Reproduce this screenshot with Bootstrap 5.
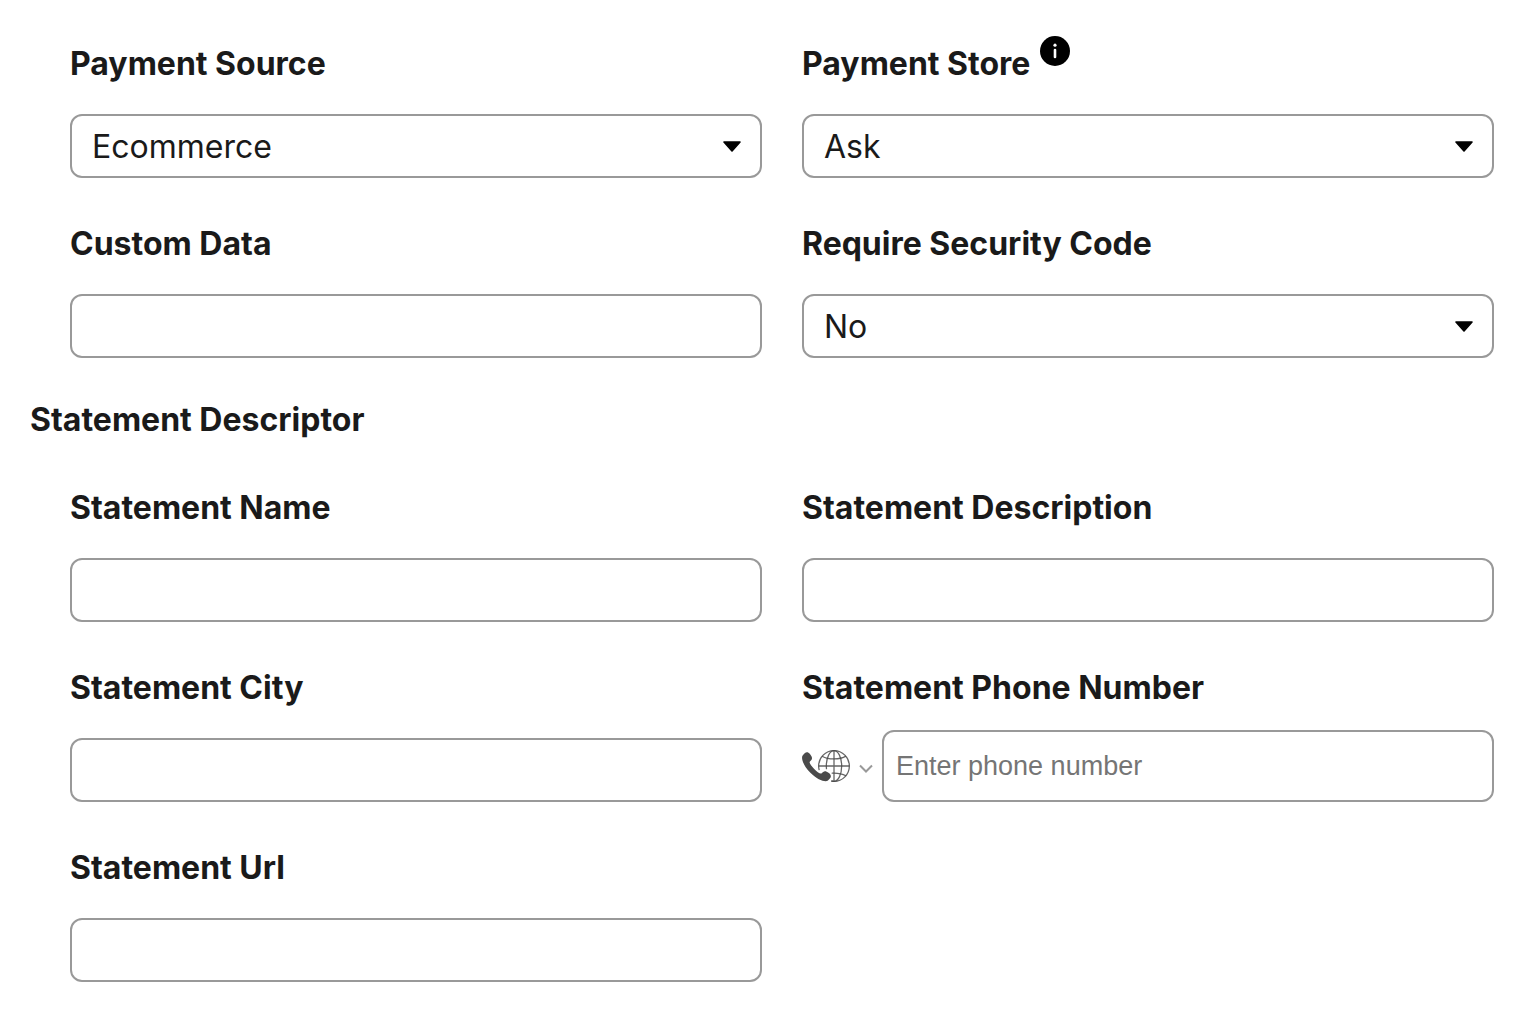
<!DOCTYPE html>
<html lang="en">
<head>
<meta charset="utf-8">
<meta name="viewport" content="width=device-width, initial-scale=1">
<title>Payment settings</title>
<link href="https://cdn.jsdelivr.net/npm/bootstrap@5.3.0/dist/css/bootstrap.min.css" rel="stylesheet">
<style>
  body { font-family: Inter, "Liberation Sans", sans-serif; font-size: 32px; line-height: 40px; color: #1a1a1a; background: #fff; }
  .settings { padding: 44px 38px 36px 30px; }
  .field-group { padding-left: 40px; }
  .field-grid { --bs-gutter-x: 40px; --bs-gutter-y: 46px; }
  .form-label, .section-title { font-size: 32px; line-height: 40px; font-weight: 700; }
  .form-label { margin-bottom: 30px; }
  .section-title { margin: 42px 0 48px; }
  .form-control, .form-select {
    height: 64px; padding: 0 20px; border: 2px solid #999; border-radius: 12px;
    font-size: 32px; line-height: 40px; color: #1a1a1a;
  }
  .form-select {
    padding: 2px 56px 0 20px;
    background-image: url("data:image/svg+xml,%3Csvg xmlns='http://www.w3.org/2000/svg' viewBox='0 0 18 12'%3E%3Cpath d='M1 1H17L9 10Z' stroke='%23000' stroke-width='1.6' stroke-linejoin='round'/%3E%3C/svg%3E");
    background-position: right 19px top 25px; background-size: 18px 12px;
  }
  .info-btn { top: -8px; margin-left: 10px; width: 30px; height: 30px; line-height: 0; }
  .form-label.phone-label { margin-bottom: 22px; }
  .form-control.phone-input { height: 72px; padding: 0 12px; font-family: "Liberation Sans", sans-serif; font-size: 27px; }
  .phone-input::placeholder { color: #757575; opacity: 1; }
  .country { gap: 9px; margin-right: 9px; color: #4a4a4a; }
  .country-arrow { margin-top: 6px; color: #999; }
</style>
</head>
<body>
<form class="settings">
  <div class="field-group">
    <div class="row field-grid">
      <div class="col-md-6">
        <label class="form-label d-block" for="source">Payment Source</label>
        <select class="form-select" id="source"><option>Ecommerce</option></select>
      </div>
      <div class="col-md-6">
        <div class="d-flex">
          <label class="form-label" for="store">Payment Store</label>
          <div class="position-relative">
            <button type="button" class="info-btn btn p-0 border-0 rounded-circle position-absolute" aria-label="About payment store">
              <svg width="30" height="30" viewBox="0 0 30 30" aria-hidden="true">
                <circle cx="15" cy="15" r="15" fill="#000"/>
                <circle cx="15" cy="9.2" r="1.6" fill="#fff"/>
                <path d="M15 14v7" stroke="#fff" stroke-width="2.6" stroke-linecap="round"/>
              </svg>
            </button>
          </div>
        </div>
        <select class="form-select" id="store"><option>Ask</option></select>
      </div>
      <div class="col-md-6">
        <label class="form-label d-block" for="custom">Custom Data</label>
        <input type="text" class="form-control" id="custom">
      </div>
      <div class="col-md-6">
        <label class="form-label d-block" for="security">Require Security Code</label>
        <select class="form-select" id="security"><option>No</option><option>Yes</option></select>
      </div>
    </div>
  </div>

  <h2 class="section-title">Statement Descriptor</h2>

  <div class="field-group">
    <div class="row field-grid">
      <div class="col-md-6">
        <label class="form-label d-block" for="st-name">Statement Name</label>
        <input type="text" class="form-control" id="st-name">
      </div>
      <div class="col-md-6">
        <label class="form-label d-block" for="st-desc">Statement Description</label>
        <input type="text" class="form-control" id="st-desc">
      </div>
      <div class="col-md-6">
        <label class="form-label d-block" for="st-city">Statement City</label>
        <input type="text" class="form-control" id="st-city">
      </div>
      <div class="col-md-6">
        <label class="form-label phone-label d-block" for="st-phone">Statement Phone Number</label>
        <div class="d-flex align-items-center">
          <button type="button" class="country btn p-0 border-0 d-flex align-items-center flex-shrink-0" aria-label="Phone number country">
            <svg width="48" height="32" viewBox="0 0 75 50" aria-hidden="true">
              <g stroke="currentColor" stroke-opacity=".85" fill="none" stroke-width="2" stroke-miterlimit="10">
                <path stroke-linecap="round" d="M47.2,36.1C48.1,36,49,36,50,36c7.4,0,14,1.7,18.5,4.3"/>
                <path d="M68.6,9.6C64.2,12.3,57.5,14,50,14c-7.4,0-14-1.7-18.5-4.3"/>
                <path d="M26 25H74M50 1V49"/>
                <path stroke-linecap="round" d="M46.3,48.7c1.2,0.2,2.5,0.3,3.7,0.3c13.3,0,24-10.7,24-24S63.3,1,50,1S26,11.7,26,25c0,2,0.3,3.9,0.7,5.8"/>
                <path stroke-linecap="round" d="M46.8,48.2c1,0.6,2.1,0.8,3.2,0.8c6.6,0,12-10.7,12-24S56.6,1,50,1S38,11.7,38,25c0,1.4,0.1,2.7,0.2,4c0,0.1,0,0.2,0,0.2"/>
              </g>
              <path fill="currentColor" d="M12.4,17.9c2.9-2.9,5.4-4.8,0.3-11.2S4.1,5.2,1.3,8.1C-2,11.4,1.1,23.5,13.1,35.6s24.3,15.2,27.5,11.9c2.8-2.8,7.8-6.3,1.4-11.5s-8.3-2.6-11.2,0.3c-2,2-7.2-2.2-11.7-6.7S10.4,19.9,12.4,17.9z"/>
            </svg>
            <svg class="country-arrow" width="14" height="10" viewBox="0 0 14 10" fill="none" stroke="currentColor" stroke-width="2" aria-hidden="true"><path d="M1 1.5L7 7.5L13 1.5"/></svg>
          </button>
          <input type="tel" class="form-control phone-input" id="st-phone" placeholder="Enter phone number">
        </div>
      </div>
      <div class="col-md-6">
        <label class="form-label d-block" for="st-url">Statement Url</label>
        <input type="text" class="form-control" id="st-url">
      </div>
    </div>
  </div>
</form>
<script src="https://cdn.jsdelivr.net/npm/bootstrap@5.3.0/dist/js/bootstrap.bundle.min.js"></script>
</body>
</html>
